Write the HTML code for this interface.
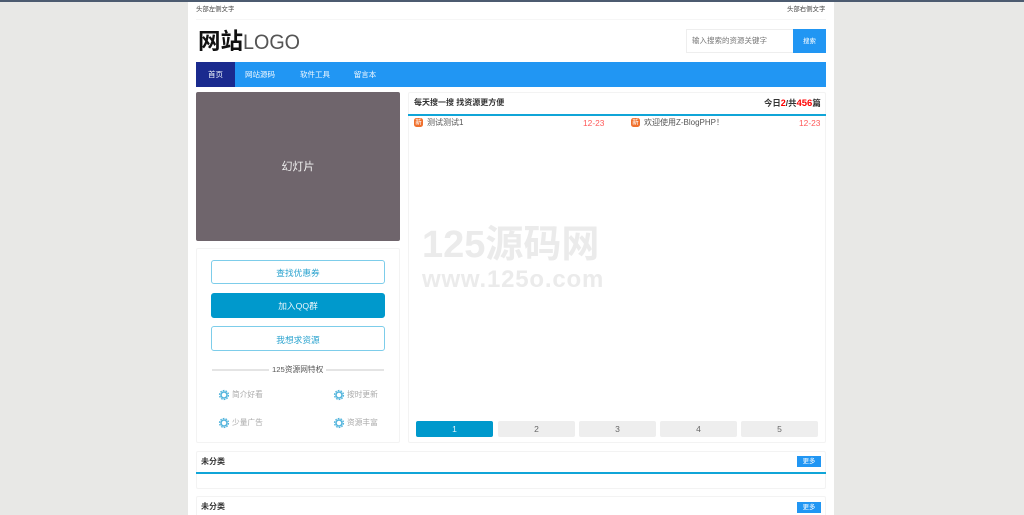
<!DOCTYPE html>
<html lang="zh"><head><meta charset="utf-8"><title>网站</title>
<style>
html,body{margin:0;padding:0;width:1024px;height:515px;overflow:hidden;background:#e8e8e6}
body{position:relative;font-family:"Liberation Sans","Noto Sans CJK SC",sans-serif;color:#333}
div,span,a{position:absolute;white-space:nowrap;box-sizing:border-box}
.n{position:static}
.t{font-size:6.4px;line-height:10px;color:#444}
.nav{font-size:7.5px;line-height:26px;color:#f4faff;top:62px;text-align:center}
.btn{left:211px;width:174px;border:1px solid #7dcdea;border-radius:3px;text-align:center;font-size:8.7px;color:#2aa3cf;background:#fff}
.pr{font-size:7.7px;line-height:12px;color:#aaa}
.box{background:#fff;border:1px solid #f3f3f3;border-radius:2px}
.pg{top:421px;width:77px;height:16px;background:#eee;border-radius:2px;text-align:center;font-size:8.5px;line-height:16px;color:#666}
.more{left:797px;width:24px;height:11px;background:#2196f3;color:#fff;font-size:6.4px;line-height:11px;text-align:center}
.h{font-size:8px;line-height:12px;font-weight:bold;color:#333}
.red{color:#ff5a5a;font-size:8.4px;line-height:12px}
.ic{width:9px;height:9px;background:#f0702c;border-radius:2.5px;color:#fff;font-size:6.5px;line-height:9px;text-align:center}
</style></head>
<body>
<div style="left:0;top:0;width:1024px;height:2px;background:#4c5b70"></div>
<div style="left:188px;top:2px;width:646px;height:513px;background:#fff"></div>
<div class="t" style="left:196px;top:5px">头部左侧文字</div>
<div class="t" style="left:787px;top:5px">头部右侧文字</div>
<div style="left:196px;top:19px;width:630px;height:1px;background:#f6f6f6"></div>

<div style="left:198px;top:27px;font-size:22.5px;line-height:30px;font-weight:bold;color:#111">网站</div>
<div style="left:243px;top:30px;font-size:21px;line-height:26px;color:#555;transform:scaleX(.94);transform-origin:0 0">LOGO</div>

<div style="left:686px;top:29px;width:108px;height:24px;border:1px solid #eee;background:#fff"></div>
<div style="left:692px;top:36px;font-size:7.5px;line-height:10px;color:#777">输入搜索的资源关键字</div>
<div style="left:793px;top:29px;width:33px;height:24px;background:#2196f3;color:#fff;font-size:6.4px;line-height:25px;text-align:center">搜索</div>

<div style="left:196px;top:62px;width:630px;height:25px;background:#2196f3"></div>
<div class="nav" style="left:196px;width:39px;height:25px;background:#1a2a8e">首页</div>
<div class="nav" style="left:235px;width:50px">网站源码</div>
<div class="nav" style="left:290px;width:50px">软件工具</div>
<div class="nav" style="left:344px;width:42px">留言本</div>

<div style="left:196px;top:92px;width:204px;height:149px;background:#6f656c;border-radius:2px;color:#f2f2f2;font-size:11px;line-height:150px;text-align:center">幻灯片</div>

<div class="box" style="left:196px;top:248px;width:204px;height:195px"></div>
<div class="btn" style="top:260px;height:24px;line-height:25px">查找优惠券</div>
<div class="btn" style="top:293px;height:25px;line-height:24px;background:#0099cc;border-color:#0099cc;color:#e8f6fb">加入QQ群</div>
<div class="btn" style="top:326px;height:25px;line-height:26px">我想求资源</div>
<div style="left:212px;top:369px;width:57px;height:2px;background:#e4e4e4"></div>
<div style="left:326px;top:369px;width:58px;height:2px;background:#e4e4e4"></div>
<div style="left:272px;top:364px;font-size:7.7px;line-height:12px;color:#555">125资源网特权</div>

<svg style="position:absolute;left:0;top:0" width="1024" height="515">
<defs><g id="g" fill="none" stroke="#4fb3dc"><circle r="3" stroke-width="1.5"/><circle r="4.5" stroke-width="1.2" stroke-dasharray="1.7 1.13"/></g></defs>
<use href="#g" x="224" y="395"/><use href="#g" x="339" y="395"/><use href="#g" x="224" y="423"/><use href="#g" x="339" y="423"/>
</svg>
<div class="pr" style="left:232px;top:389px">简介好看</div>
<div class="pr" style="left:347px;top:389px">按时更新</div>
<div class="pr" style="left:232px;top:417px">少量广告</div>
<div class="pr" style="left:347px;top:417px">资源丰富</div>

<div class="box" style="left:408px;top:92px;width:418px;height:351px"></div>
<div class="h" style="left:414px;top:97px">每天搜一搜 找资源更方便</div>
<div class="h" style="left:764px;top:97px;font-size:8.4px">今日<b class="n" style="color:#f00;font-size:9px">2</b>/共<b class="n" style="color:#f00;font-size:9.5px">456</b>篇</div>
<div style="left:408px;top:114px;width:418px;height:2px;background:#10a5d8"></div>
<div class="ic" style="left:414px;top:118px">新</div>
<div style="left:427px;top:117px;font-size:8px;line-height:12px;color:#555">测试测试1</div>
<div class="red" style="left:583px;top:117px">12-23</div>
<div class="ic" style="left:631px;top:118px">新</div>
<div style="left:644px;top:117px;font-size:8px;line-height:12px;color:#555">欢迎使用Z-BlogPHP！</div>
<div class="red" style="left:799px;top:117px">12-23</div>

<div style="left:422px;top:223px;font-size:38px;line-height:44px;font-weight:bold;color:#ebebeb">125源码网</div>
<div style="left:422px;top:266px;font-size:24px;line-height:28px;font-weight:bold;color:#ebebeb;letter-spacing:.8px">www.125o.com</div>

<div class="pg" style="left:416px;background:#0099cc;color:#dff4fb">1</div>
<div class="pg" style="left:498px">2</div>
<div class="pg" style="left:579px">3</div>
<div class="pg" style="left:660px">4</div>
<div class="pg" style="left:741px">5</div>

<div class="box" style="left:196px;top:451px;width:630px;height:38px"></div>
<div class="h" style="left:201px;top:456px">未分类</div>
<div class="more" style="top:456px">更多</div>
<div style="left:196px;top:472px;width:630px;height:2px;background:#10a5d8"></div>

<div class="box" style="left:196px;top:496px;width:630px;height:30px"></div>
<div class="h" style="left:201px;top:501px">未分类</div>
<div class="more" style="top:502px">更多</div>
</body></html>
